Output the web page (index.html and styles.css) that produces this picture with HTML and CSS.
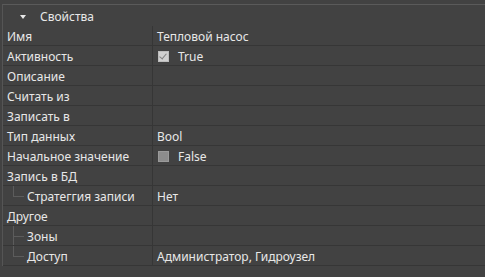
FILE: index.html
```html
<!DOCTYPE html>
<html lang="ru">
<head>
    <meta charset="UTF-8">
    <title>Свойства</title>
    <link rel="stylesheet" href="styles.css">
</head>
<body>
    <div class="panel">
        <div class="group-head">
            <span class="arrow"></span>
            <span>Свойства</span>
        </div>
        <div class="row">
            <div class="name">Имя</div>
            <div class="value">Тепловой насос</div>
        </div>
        <div class="row">
            <div class="name">Активность</div>
            <div class="value"><i class="check on"></i>True</div>
        </div>
        <div class="row">
            <div class="name">Описание</div>
            <div class="value"></div>
        </div>
        <div class="row">
            <div class="name">Считать из</div>
            <div class="value"></div>
        </div>
        <div class="row">
            <div class="name">Записать в</div>
            <div class="value"></div>
        </div>
        <div class="row">
            <div class="name">Тип данных</div>
            <div class="value">Bool</div>
        </div>
        <div class="row">
            <div class="name">Начальное значение</div>
            <div class="value"><i class="check"></i>False</div>
        </div>
        <div class="row">
            <div class="name">Запись в БД</div>
            <div class="value"></div>
        </div>
        <div class="row">
            <div class="name child last">Стратеггия записи</div>
            <div class="value">Нет</div>
        </div>
        <div class="row">
            <div class="name">Другое</div>
            <div class="value"></div>
        </div>
        <div class="row">
            <div class="name child">Зоны</div>
            <div class="value"></div>
        </div>
        <div class="row">
            <div class="name child last">Доступ</div>
            <div class="value">Администратор, Гидроузел</div>
        </div>
    </div>
</body>
</html>
```

FILE: styles.css
```css
body {
    margin: 0;
    background: #424242;
    color: #e8e8e8;
    font-family: "Noto Sans", "Open Sans", sans-serif;
    font-size: 12px;
    height: 277px;
    overflow: hidden;
}

.panel {
    margin-top: 4px;
    margin-left: 2px;
    border-top: 1px solid #5a5a5a;
    border-left: 1px solid #555;
}

.group-head {
    height: 21px;
    display: flex;
    align-items: center;
    padding-left: 17px;
    padding-top: 2px;
    box-sizing: border-box;
}

.arrow {
    width: 0;
    height: 0;
    border-left: 3px solid transparent;
    border-right: 3px solid transparent;
    border-top: 4px solid #e8e8e8;
    margin-right: 14px;
    margin-top: 0;
}

.row {
    display: grid;
    grid-template-columns: 150px 1fr;
    height: 19px;
    border-bottom: 1px solid #363636;
}

.name {
    padding-left: 4px;
    line-height: 21px;
    white-space: nowrap;
    border-right: 1px solid #363636;
    position: relative;
    overflow: hidden;
}

.name.child {
    padding-left: 24px;
}

/* линии дерева */
.name.child::before {
    content: "";
    position: absolute;
    left: 10px;
    top: 0;
    height: 19px;
    border-left: 1px solid #5c5c5c;
}

.name.child.last::before {
    height: 10px;
}

.name.child::after {
    content: "";
    position: absolute;
    left: 10px;
    top: 10px;
    width: 11px;
    border-top: 1px solid #5c5c5c;
}

.value {
    padding-left: 4px;
    padding-top: 2px;
    box-sizing: border-box;
    line-height: 19px;
    display: flex;
    align-items: center;
    white-space: nowrap;
    overflow: hidden;
}

.check {
    width: 9px;
    height: 9px;
    border: 1px solid #9a9a9a;
    background: #8c8c8c;
    margin-left: 1px;
    margin-right: 9px;
    position: relative;
}

.check.on {
    background: #d0d0d0;
    border-color: #bdbdbd;
}

.check.on::after {
    content: "";
    position: absolute;
    left: 2px;
    top: 0px;
    width: 3px;
    height: 6px;
    border-right: 1px solid #808080;
    border-bottom: 1px solid #808080;
    transform: rotate(40deg);
}
```
